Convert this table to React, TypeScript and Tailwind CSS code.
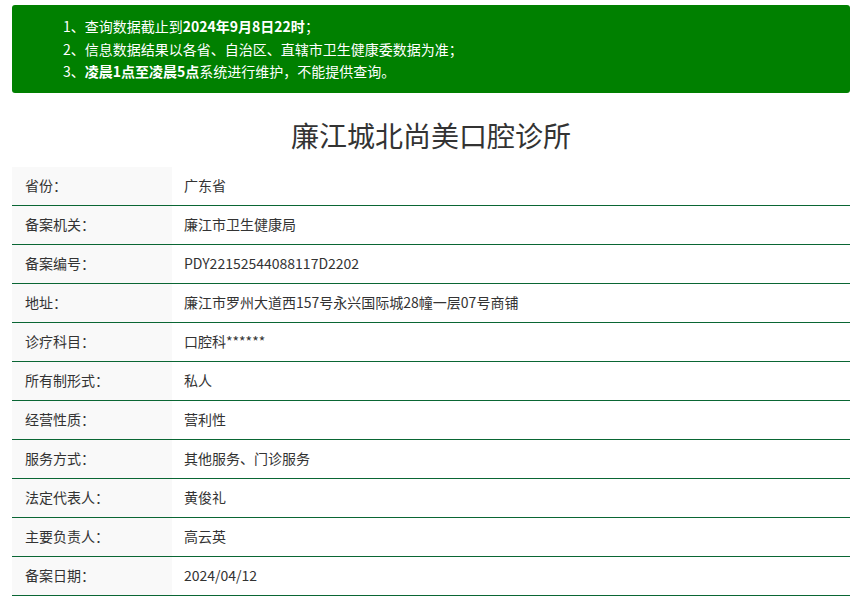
const rows: [string, string][] = [
  ['省份：', '广东省'],
  ['备案机关：', '廉江市卫生健康局'],
  ['备案编号：', 'PDY22152544088117D2202'],
  ['地址：', '廉江市罗州大道西157号永兴国际城28幢一层07号商铺'],
  ['诊疗科目：', '口腔科******'],
  ['所有制形式：', '私人'],
  ['经营性质：', '营利性'],
  ['服务方式：', '其他服务、门诊服务'],
  ['法定代表人：', '黄俊礼'],
  ['主要负责人：', '高云英'],
  ['备案日期：', '2024/04/12'],
];

const App = () => {
  return (
    <div
      className="w-[866px] min-h-[609px] bg-white pl-3 pr-4 pt-[5px] text-[#333]"
      style={{ fontFamily: '"Noto Sans CJK SC", "Open Sans", sans-serif' }}
    >
      <div className="bg-[#008000] rounded-[3px] pl-[51px] pt-[10px] pb-[10px] text-white text-[14px] leading-[22.5px]">
        <p>
          1、查询数据截止到<b>2024年9月8日22时</b>；
        </p>
        <p>2、信息数据结果以各省、自治区、直辖市卫生健康委数据为准；</p>
        <p>
          3、<b>凌晨1点至凌晨5点</b>系统进行维护，不能提供查询。
        </p>
      </div>

      <h1 className="text-center text-[28px] leading-[34px] mt-[25px] mb-[15px] font-normal">
        廉江城北尚美口腔诊所
      </h1>

      <div className="flex flex-col">
        {rows.map(([label, value]) => (
          <div key={label} className="flex border-b border-[#0a6634] h-[39px] text-[14px]">
            <div className="w-[160px] bg-[#f9f9f9] pl-[13px] flex items-center">{label}</div>
            <div className="flex-1 pl-[12px] flex items-center">{value}</div>
          </div>
        ))}
      </div>
    </div>
  );
};

export default App;
